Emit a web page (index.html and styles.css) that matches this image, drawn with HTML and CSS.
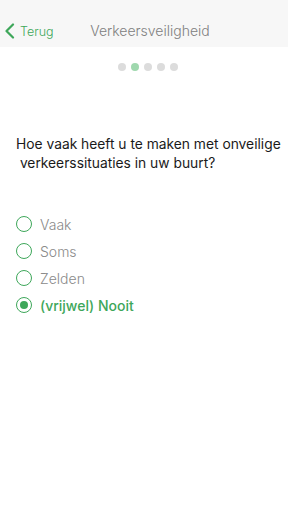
FILE: index.html
```html
<!DOCTYPE html>
<html>
<head>
<meta charset="utf-8">
<link rel="stylesheet" href="styles.css">
</head>
<body>
<div class="header">
  <div class="back">
    <svg width="12" height="16" viewBox="0 0 12 16"><path d="M9 1.5 L2.5 8 L9 14.5" fill="none" stroke="#3ea75a" stroke-width="2.2" stroke-linecap="round" stroke-linejoin="round"/></svg>
    <span>Terug</span>
  </div>
  <div class="title">Verkeersveiligheid</div>
</div>
<div class="dots">
  <span class="dot"></span><span class="dot active"></span><span class="dot"></span><span class="dot"></span><span class="dot"></span>
</div>
<div class="question">Hoe vaak heeft u te maken met onveilige<br>&nbsp;verkeerssituaties in uw buurt?</div>
<div class="options">
  <div class="option"><span class="radio"></span><span>Vaak</span></div>
  <div class="option"><span class="radio"></span><span>Soms</span></div>
  <div class="option"><span class="radio"></span><span>Zelden</span></div>
  <div class="option selected"><span class="radio"></span><span>(vrijwel) Nooit</span></div>
</div>
</body>
</html>
```
FILE: styles.css
```css
html, body { margin: 0; padding: 0; background: #fff; }
body { font-family: Inter, Roboto, "Liberation Sans", sans-serif; width: 288px; font-weight: 300; }
.header { height: 47px; background: #f7f7f7; position: relative; display: flex; align-items: center; padding-top: 15px; box-sizing: border-box; }
.back { display: flex; align-items: center; gap: 4px; padding-left: 4px; color: #3ea75a; font-size: 12.5px; font-weight: 300; }
.title { position: absolute; left: 12px; right: 0; top: 22px; text-align: center; font-size: 14px; color: #808080; pointer-events: none; }
.dots { display: flex; justify-content: center; gap: 5px; margin-top: 16px; padding-left: 7px; }
.dot { width: 8px; height: 8px; border-radius: 50%; background: #dcdcdc; }
.dot.active { background: #9fd8ae; }
.question { margin: 64px 0 0 16px; font-size: 13.8px; line-height: 19px; color: #1a1a1a; font-weight: 400; }
.options { margin: 42px 0 0 16px; display: flex; flex-direction: column; gap: 9px; }
.option { display: flex; align-items: center; gap: 8px; font-size: 14px; color: #8a8a8a; height: 18px; }
.radio { width: 14px; height: 14px; border: 1.3px solid #3ea75a; border-radius: 50%; box-sizing: content-box; position: relative; }
.option.selected { color: #3ea75a; font-weight: 500; }
.option.selected .radio::after { content: ""; position: absolute; left: 3px; top: 3px; width: 8px; height: 8px; border-radius: 50%; background: #3ea75a; }
```
